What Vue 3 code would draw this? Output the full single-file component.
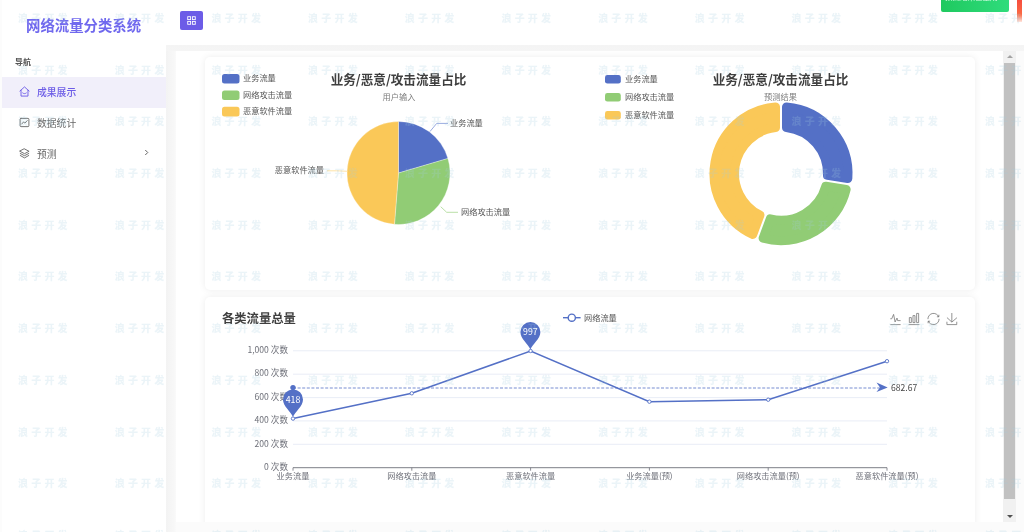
<script setup>
const cols = Array.from({ length: 11 }, (_, i) => i)
const rows = Array.from({ length: 11 }, (_, i) => i)
const marks = rows.flatMap((r) => cols.map((c) => `${r}-${c}`))

const nav = [
  { label: '成果展示', icon: 'home', active: true },
  { label: '数据统计', icon: 'chart' },
  { label: '预测', icon: 'layers', arrow: true },
]

function polar(cx, cy, radius, deg) {
  const a = ((deg - 90) * Math.PI) / 180
  return [cx + radius * Math.cos(a), cy + radius * Math.sin(a)]
}
function slice(cx, cy, r, from, to) {
  const [x1, y1] = polar(cx, cy, r, from)
  const [x2, y2] = polar(cx, cy, r, to)
  const large = to - from > 180 ? 1 : 0
  return `M${cx},${cy}L${x1},${y1}A${r},${r} 0 ${large} 1 ${x2},${y2}Z`
}
function ring(cx, cy, R, r, from, to, corner, gap) {
  const d = corner + gap
  const outer = R - corner
  const inner = r + corner
  const oa = (Math.asin(d / outer) * 180) / Math.PI
  const ia = (Math.asin(d / inner) * 180) / Math.PI
  const [x1, y1] = polar(cx, cy, outer, from + oa)
  const [x2, y2] = polar(cx, cy, outer, to - oa)
  const [x3, y3] = polar(cx, cy, inner, to - ia)
  const [x4, y4] = polar(cx, cy, inner, from + ia)
  const large = to - from > 180 ? 1 : 0
  return `M${x1},${y1}A${outer},${outer} 0 ${large} 1 ${x2},${y2}L${x3},${y3}A${inner},${inner} 0 ${large} 0 ${x4},${y4}Z`
}

const colors = ['#5470c6', '#91cc75', '#fac858']
const legendNames = ['业务流量', '网络攻击流量', '恶意软件流量']

const pieSlices = [
  { color: colors[0], d: slice(398.5, 173, 51.5, 0, 73.6) },
  { color: colors[1], d: slice(398.5, 173, 51.5, 73.6, 184.5) },
  { color: colors[2], d: slice(398.5, 173, 51.5, 184.5, 360) },
]
const donutSlices = [
  { color: colors[0], d: ring(781, 173.7, 71.5, 42, 0, 98.8, 4.5, 1) },
  { color: colors[1], d: ring(781, 173.7, 71.5, 42, 98.8, 200.2, 4.5, 1) },
  { color: colors[2], d: ring(781, 173.7, 71.5, 42, 200.2, 360, 4.5, 1) },
]

const yTicks = [
  { label: '1,000 次数', y: 350.8 },
  { label: '800 次数', y: 374.2 },
  { label: '600 次数', y: 397.6 },
  { label: '400 次数', y: 420.9 },
  { label: '200 次数', y: 444.3 },
  { label: '0 次数', y: 467.7 },
]
const points = [
  { x: 293, y: 418.6, label: '业务流量' },
  { x: 411.8, y: 393.3, label: '网络攻击流量' },
  { x: 530.6, y: 351, label: '恶意软件流量' },
  { x: 649.4, y: 401.7, label: '业务流量(预)' },
  { x: 768.2, y: 399.7, label: '网络攻击流量(预)' },
  { x: 887, y: 361.2, label: '恶意软件流量(预)' },
]
const linePoints = points.map((p) => `${p.x},${p.y}`).join(' ')

function pin(x, y) {
  return `M${x},${y + 17.5}C${x - 2},${y + 12} ${x - 10},${y + 7} ${x - 10},${y}A10,10 0 1 1 ${x + 10},${y}C${x + 10},${y + 7} ${x + 2},${y + 12} ${x},${y + 17.5}Z`
}
const tools = [
  { x: 889.5, d: 'M4.1,28.9h7.1l9.3-22l7.4,38l9.7-19.7l3,12.8h14.9M4.1,58h51.4' },
  { x: 908, d: 'M6.7,22.9h10V48h-10V22.9zM24.9,13h10v35h-10V13zM43.2,2h10v46h-10V2zM3.1,58h53.7' },
  { x: 927.5, d: 'M47,18.9h9.8V8.7M56.3,20.1C52.1,9,40.5,0.6,26.8,2.1C12.6,3.7,1.6,16.2,2.1,30.6M13,41.1H3.1v10.2M3.7,39.9c4.2,11.1,15.8,19.5,29.5,18c14.2-1.6,25.2-14.1,24.7-28.5' },
  { x: 946, d: 'M4.7,22.9L29.3,45.5L54.7,23.4M4.6,43.6L4.6,58L53.8,58L53.8,43.6M29.2,45.1L29.2,0' },
]
</script>

<template>
  <div class="app">
    <aside class="side">
      <div class="brand">网络流量分类系统</div>
      <div class="section">导航</div>
      <nav class="menu">
        <div v-for="item in nav" :key="item.label" class="item" :class="{ active: item.active }">
          <svg class="ico" viewBox="0 0 12 12" fill="none" stroke="currentColor" stroke-width="1" stroke-linejoin="round" stroke-linecap="round">
            <template v-if="item.icon === 'home'">
              <path d="M1 5.5 6 1l5 4.5M2.2 4.6V11h7.6V4.6" />
              <path d="M4 7.6c1 1 3 1 4 0" />
            </template>
            <template v-else-if="item.icon === 'chart'">
              <rect x="1.2" y="1.5" width="9.6" height="9" rx="1" />
              <path d="M3 7.6 5 5.4l1.4 1.2L9 4" />
            </template>
            <template v-else>
              <path d="M6 1 11 3.6 6 6.2 1 3.6Z" />
              <path d="M1.4 6 6 8.4 10.6 6M1.4 8.2 6 10.8l4.6-2.6" />
            </template>
          </svg>
          <span class="lbl">{{ item.label }}</span>
          <svg v-if="item.arrow" class="chev" viewBox="0 0 6 8" fill="none" stroke="currentColor" stroke-width="1.1">
            <path d="M1.5 1 4.5 4 1.5 7" />
          </svg>
        </div>
      </nav>
    </aside>

    <div class="main">
      <header class="top">
        <button class="grid-btn" type="button" aria-label="menu">
          <svg viewBox="0 0 10 10" width="9" height="9" fill="none" stroke="#fff" stroke-width="1">
            <rect x="0.8" y="0.8" width="3.2" height="3.2" />
            <rect x="6" y="0.8" width="3.2" height="3.2" />
            <rect x="0.8" y="6" width="3.2" height="3.2" />
            <rect x="6" y="6" width="3.2" height="3.2" />
          </svg>
        </button>
      </header>

      <div class="body">
        <div class="panel">
          <div class="scroll">
            <section class="card pies">
              <svg class="half" viewBox="205 57 385 233">
                <g v-for="(name, i) in legendNames" :key="name">
                  <rect x="222" :y="74 + i * 16.4" width="17.5" height="9.6" rx="2.5" :fill="colors[i]" />
                  <text x="243" :y="81.2 + i * 16.4" class="lg">{{ name }}</text>
                </g>
                <text x="398.5" y="84" class="ttl" text-anchor="middle">业务/恶意/攻击流量占比</text>
                <text x="399" y="100" class="sub" text-anchor="middle">用户输入</text>
                <path v-for="s in pieSlices" :key="s.color" :d="s.d" :fill="s.color" stroke="#fff" stroke-width="0.3" />
                <path d="M430 131.5 436.7 123.4H448" fill="none" stroke="#7f95d8" stroke-width="0.8" />
                <path d="M440.7 206.7 446.7 212.3H458" fill="none" stroke="#a8d890" stroke-width="0.8" />
                <path d="M348 171.3 336.7 170.8H327" fill="none" stroke="#fcdc92" stroke-width="0.8" />
                <text x="450" y="125.8" class="lg">业务流量</text>
                <text x="461" y="214.8" class="lg">网络攻击流量</text>
                <text x="324" y="173.2" class="lg" text-anchor="end">恶意软件流量</text>
              </svg>
              <svg class="half" viewBox="590 57 385 233">
                <g v-for="(name, i) in legendNames" :key="name">
                  <rect x="605" :y="75 + i * 18" width="15.8" height="8.6" rx="2.4" :fill="colors[i]" />
                  <text x="625" :y="82 + i * 18" class="lg">{{ name }}</text>
                </g>
                <text x="780.5" y="84" class="ttl" text-anchor="middle">业务/恶意/攻击流量占比</text>
                <text x="780.5" y="100" class="sub" text-anchor="middle">预测结果</text>
                <path
                  v-for="s in donutSlices"
                  :key="s.color"
                  :d="s.d"
                  :fill="s.color"
                  :stroke="s.color"
                  stroke-width="9"
                  stroke-linejoin="round"
                />
              </svg>
            </section>

            <section class="card lines">
              <svg class="wide" viewBox="205 297 770 240">
                <text x="222" y="323" class="ttl big">各类流量总量</text>
                <path d="M563 317.7H580.6" stroke="#5470c6" stroke-width="1.4" />
                <circle cx="571.8" cy="317.7" r="3.6" fill="#fff" stroke="#5470c6" stroke-width="1.4" />
                <text x="584" y="320.6" class="lg">网络流量</text>

                <g v-for="t in tools" :key="t.x" :transform="`translate(${t.x} 313) scale(0.2)`">
                  <path :d="t.d" fill="none" stroke="#777" stroke-width="4" />
                </g>

                <path v-for="t in yTicks.slice(0, 5)" :key="t.y" :d="`M293 ${t.y}H887`" stroke="#e6ebf5" stroke-width="0.9" />
                <path d="M293 467.7H887" stroke="#6e7079" stroke-width="0.9" />
                <path v-for="p in points" :key="p.x" :d="`M${p.x} 467.7v3`" stroke="#6e7079" stroke-width="0.8" />
                <text v-for="t in yTicks" :key="t.label" x="288" :y="t.y + 2.2" class="ax yax" text-anchor="end">{{ t.label }}</text>
                <text v-for="p in points" :key="p.label" :x="p.x" y="479" class="ax" text-anchor="middle">{{ p.label }}</text>

                <path d="M293 388H880" stroke="#5470c6" stroke-width="1" stroke-dasharray="3 1.6" opacity="0.8" />
                <polyline :points="linePoints" fill="none" stroke="#5470c6" stroke-width="1.5" />
                <circle v-for="p in points" :key="p.x + 'c'" :cx="p.x" :cy="p.y" r="1.7" fill="#fff" stroke="#5470c6" stroke-width="0.9" />
                <circle cx="293" cy="387.6" r="2.7" fill="#5470c6" />
                <path d="M887.7 387.6 876.5 382.6 880 387.6 876.5 392Z" fill="#5470c6" />
                <text x="891" y="390.8" class="val">682.67</text>

                <path :d="pin(293, 399.4)" fill="#5470c6" />
                <text x="293" y="402.8" class="pin" text-anchor="middle">418</text>
                <path :d="pin(530.4, 332)" fill="#5470c6" />
                <text x="530.4" y="335.4" class="pin" text-anchor="middle">997</text>
              </svg>
            </section>
          </div>
          <div class="bar">
            <span class="up"></span>
            <span class="thumb"></span>
            <span class="down"></span>
          </div>
        </div>
      </div>
    </div>

    <div class="toast-green"><span>预测结果已生成！</span></div>
    <div class="toast-red"></div>

    <div class="marks" aria-hidden="true">
      <span v-for="m in marks" :key="m">浪子开发</span>
    </div>
  </div>
</template>

<style>
html,
body {
  margin: 0;
  background: #fff;
}
</style>

<style scoped>
.app {
  position: relative;
  display: flex;
  width: 1024px;
  height: 532px;
  overflow: hidden;
  font-family: "Noto Sans CJK SC", "Noto Sans", sans-serif;
  color: #606266;
  background: #fcfcfc;
  filter: blur(0.35px);
}
.side {
  flex: 0 0 164px;
  margin-left: 2px;
  background: #fff;
  display: flex;
  flex-direction: column;
  position: relative;
  z-index: 2;
}
.brand {
  height: 50px;
  line-height: 50px;
  padding-left: 24px;
  font-size: 14.4px;
  font-weight: 700;
  color: #7069ee;
  white-space: nowrap;
}
.section {
  padding-left: 13px;
  height: 27px;
  line-height: 24px;
  font-size: 8px;
  font-weight: 700;
  color: #555;
}
.item {
  height: 31px;
  display: flex;
  align-items: center;
  padding-left: 17px;
  font-size: 9.8px;
  color: #666;
  position: relative;
}
.item.active {
  background: #f1effa;
  color: #6c5ce7;
  font-weight: 500;
}
.lbl {
  margin-top: -1px;
}
.ico {
  width: 11px;
  height: 11px;
  margin-right: 7px;
  margin-top: -3px;
  flex: none;
}
.chev {
  width: 5px;
  height: 7px;
  margin-left: auto;
  margin-right: 17px;
  margin-top: -5px;
  color: #555;
}
.main {
  flex: 1;
  min-width: 0;
  display: flex;
  flex-direction: column;
}
.top {
  flex: 0 0 45px;
  background: #fff;
  display: flex;
  align-items: center;
  padding: 0 0 0 14px;
  position: relative;
  z-index: 1;
  box-sizing: border-box;
}
.grid-btn {
  width: 23px;
  height: 18.5px;
  padding: 0;
  margin-bottom: 4px;
  border: 0;
  border-radius: 2px;
  background: #6c5ce7;
  display: flex;
  align-items: center;
  justify-content: center;
}
.body {
  flex: 1;
  min-height: 0;
  padding: 6px 8px 10px 10px;
  background:
    linear-gradient(180deg, #f4f4f4 0, #f5f5f5 6px, transparent 6px),
    linear-gradient(90deg, #f3f3f3 0, #f8f8f8 9px, #fbfbfb 10px);
}
.panel {
  height: 100%;
  display: flex;
  background: #fff;
}
.scroll {
  flex: 1;
  min-width: 0;
  overflow: hidden;
  padding: 6px 28px 0 29px;
}
.card {
  background: #fff;
  border-radius: 5px;
  box-shadow: 0 0 7px rgba(0, 0, 0, 0.08);
}
.pies {
  display: flex;
  height: 233px;
  margin-bottom: 7px;
}
.half {
  width: 385px;
  height: 233px;
  display: block;
}
.lines {
  height: 240px;
}
.wide {
  width: 770px;
  height: 240px;
  display: block;
}
.lg {
  font-size: 8.2px;
  fill: #555;
}
.ttl {
  font-size: 12.6px;
  font-weight: 700;
  fill: #3f3f3f;
}
.big {
  font-size: 12.3px;
}
.sub {
  font-size: 8.2px;
  fill: #7d7d7d;
}
.ax {
  font-size: 8.2px;
  fill: #6e7079;
}
.yax {
  font-size: 8.6px;
}
.val {
  font-size: 8.6px;
  fill: #444;
}
.pin {
  font-size: 8.8px;
  fill: #fff;
}
.bar {
  flex: 0 0 13px;
  background: #f1f1f1;
  display: flex;
  flex-direction: column;
  align-items: stretch;
}
.up,
.down {
  position: relative;
  flex: 0 0 12px;
}
.up::after {
  content: "";
  position: absolute;
  left: 3.5px;
  top: 4px;
  border: 3px solid transparent;
  border-top: 0;
  border-bottom: 3px solid #a3a3a3;
}
.thumb {
  flex: 0 0 436px;
  background: #c1c1c1;
  margin: 0 1px;
}
.down {
  flex: 1;
}
.down::after {
  content: "";
  position: absolute;
  left: 3.5px;
  bottom: 4px;
  border: 3px solid transparent;
  border-bottom: 0;
  border-top: 3px solid #505050;
}
.toast-green {
  position: absolute;
  left: 941px;
  top: -8px;
  width: 68px;
  height: 19.5px;
  border-radius: 2px;
  background: linear-gradient(90deg, #1fc95f, #2fdc7c);
  z-index: 3;
  display: flex;
  justify-content: center;
  align-items: flex-start;
}
.toast-green span {
  font-size: 7.5px;
  line-height: 10px;
  color: #d8fbe6;
  white-space: nowrap;
}
.toast-red {
  position: absolute;
  left: 1017px;
  top: -4px;
  width: 5px;
  height: 26px;
  background: linear-gradient(180deg, #f5453c 0, #fb6a45 70%, rgba(255, 190, 170, 0.4) 100%);
  z-index: 3;
}
.marks {
  position: absolute;
  left: 18px;
  top: 10px;
  display: grid;
  grid-template-columns: repeat(11, 96.7px);
  grid-auto-rows: 51.7px;
  pointer-events: none;
  z-index: 4;
}
.marks span {
  font-size: 10px;
  letter-spacing: 3.2px;
  line-height: 16px;
  color: rgba(165, 205, 222, 0.22);
  white-space: nowrap;
  font-weight: 900;
  font-family: "Noto Sans CJK SC", sans-serif;
}
</style>
